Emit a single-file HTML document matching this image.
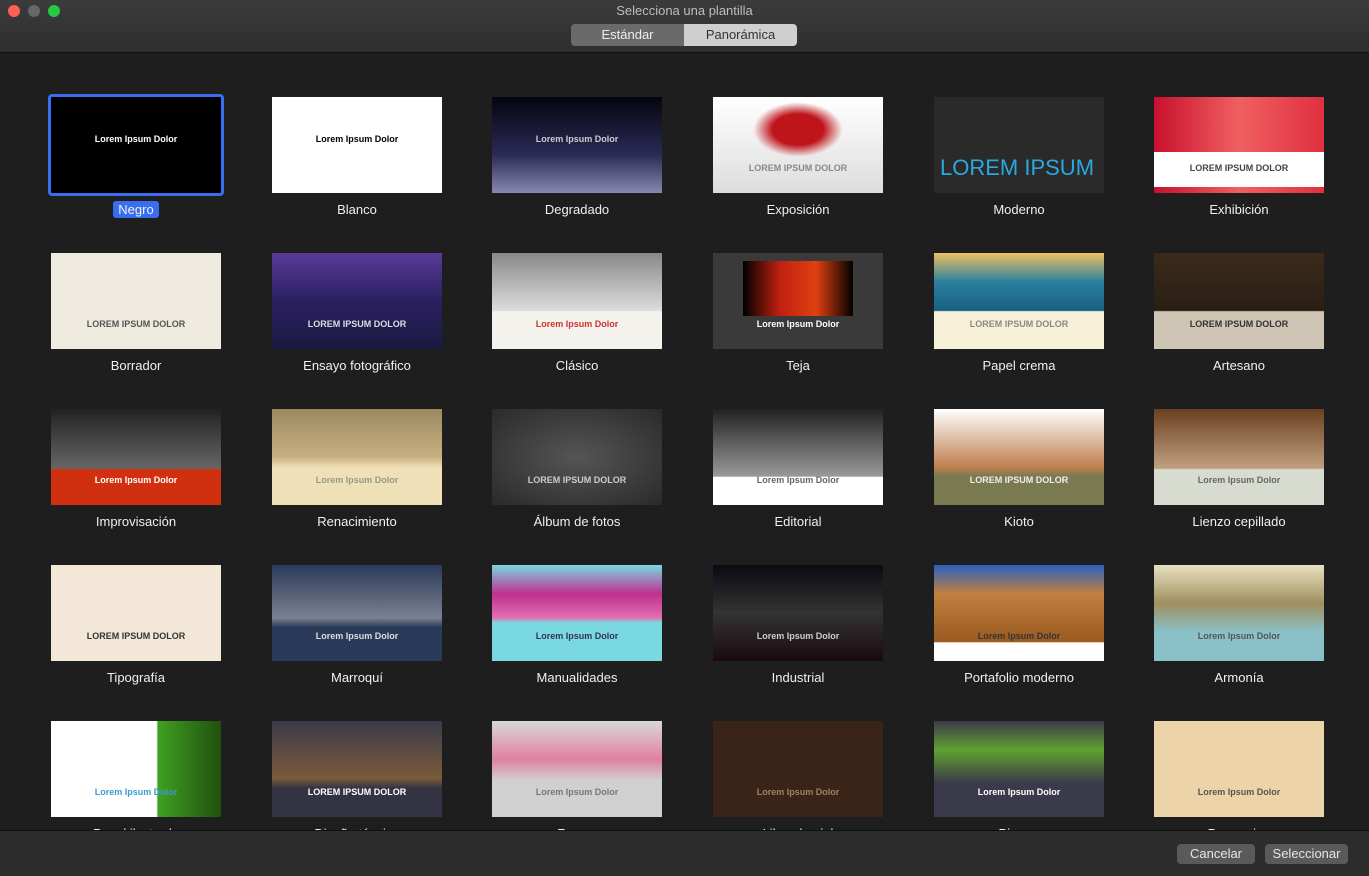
<!DOCTYPE html>
<html><head><meta charset="utf-8"><style>
*{margin:0;padding:0;box-sizing:border-box}
body{width:1369px;height:876px;background:#1e1e1e;font-family:"Liberation Sans",sans-serif;overflow:hidden;position:relative}
.top{position:absolute;left:0;top:0;width:1369px;height:53px;background:linear-gradient(#3c3b3c,#2f2e2f);border-bottom:1px solid #111}
.title{position:absolute;top:3px;width:100%;text-align:center;color:#bdbdbd;font-size:13px}
.dot{position:absolute;top:5px;width:12px;height:12px;border-radius:50%}
.seg{position:absolute;top:24px;left:571px;width:226px;height:22px;border-radius:4px;overflow:hidden;display:flex;font-size:13px}
.seg div{width:113px;text-align:center;line-height:22px}
.main{position:absolute;top:54px;left:0;width:1369px;height:776px;background:#1e1e1e;overflow:hidden}
.bot{position:absolute;top:830px;left:0;width:1369px;height:46px;background:#2c2c2c;border-top:1px solid #111}
.btn{position:absolute;top:13px;height:20px;background:#5a5a5a;color:#e6e6e6;font-size:13px;line-height:20px;text-align:center;border-radius:4px}
.t{position:absolute;width:170px;height:96px;overflow:hidden;font-size:9px;text-align:center}
.l{position:absolute;width:220px;text-align:center;color:#f0f0f0;font-size:13px}
</style></head><body>
<div class="top">
<div class="dot" style="left:8px;background:#fe5f57"></div>
<div class="dot" style="left:28px;background:#676767"></div>
<div class="dot" style="left:48px;background:#28c840"></div>
<div class="title">Selecciona una plantilla</div>
<div class="seg"><div style="background:#6a6a6a;color:#eee">Estándar</div><div style="background:#cfcfcf;color:#333">Panorámica</div></div>
</div>
<div class="main" id="m"></div>
<div class="bot">
<div class="btn" style="left:1177px;width:78px">Cancelar</div>
<div class="btn" style="left:1265px;width:83px">Seleccionar</div>
</div>
<script>
const cols=[51,272,492,713,934,1154],rows=[97,253,409,565,721];
const d=[
["Negro","#000","#fff","Lorem Ipsum Dolor"],
["Blanco","#fff","#000","Lorem Ipsum Dolor"],
["Degradado","linear-gradient(#05050f,#2a2a55 60%,#8888b0)","#ccc","Lorem Ipsum Dolor"],
["Exposición","linear-gradient(#fff,#ddd)","#888","LOREM IPSUM DOLOR",'<div style="position:absolute;left:40px;top:5px;width:90px;height:55px;background:radial-gradient(ellipse,#c0141b 40%,transparent 70%)"></div>'],
["Moderno","#2a2a2a","#2aa8e0","LOREM IPSUM"],
["Exhibición","linear-gradient(90deg,#c8102e,#f06060,#e03040)","#444","LOREM IPSUM DOLOR",'<div style="position:absolute;left:0;top:55px;width:170px;height:35px;background:#fff"></div>'],
["Borrador","#f0ebe0","#555","LOREM IPSUM DOLOR"],
["Ensayo fotográfico","linear-gradient(#5a3a9a,#2a2060 50%,#1a1a40)","#ddd","LOREM IPSUM DOLOR"],
["Clásico","linear-gradient(#888,#ddd 60%,#f4f2ec 61%)","#c33","Lorem Ipsum Dolor"],
["Teja","#3a3a3a","#fff","Lorem Ipsum Dolor",'<div style="position:absolute;left:30px;top:8px;width:110px;height:55px;background:linear-gradient(90deg,#000,#c02010,#e04010,#000)"></div>'],
["Papel crema","linear-gradient(#f0c060,#2a80a0 30%,#1a6080 60%,#f7f0d8 61%)","#888","LOREM IPSUM DOLOR"],
["Artesano","linear-gradient(#3a2a1a,#2a1e14 60%,#cfc5b5 61%)","#333","LOREM IPSUM DOLOR"],
["Improvisación","linear-gradient(#222,#666 62%,#d03010 63%)","#fff","Lorem Ipsum Dolor"],
["Renacimiento","linear-gradient(#9a8a60,#c8b080 50%,#efe0b8 61%)","#998","Lorem Ipsum Dolor"],
["Álbum de fotos","radial-gradient(#555,#2a2a2a)","#ccc","LOREM IPSUM DOLOR"],
["Editorial","linear-gradient(#222,#999 70%,#fff 71%)","#666","Lorem Ipsum Dolor"],
["Kioto","linear-gradient(#fff,#c08050 60%,#7a7a50 70%)","#eee","LOREM IPSUM DOLOR"],
["Lienzo cepillado","linear-gradient(#6a4020,#c0a080 62%,#d8dcd0 63%)","#666","Lorem Ipsum Dolor"],
["Tipografía","#f3e8d8","#333","LOREM IPSUM DOLOR"],
["Marroquí","linear-gradient(#2a3a5a,#7a8090 55%,#2a3a5a 65%)","#ddd","Lorem Ipsum Dolor"],
["Manualidades","linear-gradient(#7ad8e0,#c03090 30%,#e070b0 55%,#7ad8e0 60%)","#335","Lorem Ipsum Dolor"],
["Industrial","linear-gradient(#0a0a12,#333 50%,#1a0a10)","#ccc","Lorem Ipsum Dolor"],
["Portafolio moderno","linear-gradient(#2a60c0,#c08040 30%,#9a5a20 80%,#fff 81%)","#333","Lorem Ipsum Dolor"],
["Armonía","linear-gradient(#e8e0c0,#a09060 40%,#8ac0c8 70%)","#555","Lorem Ipsum Dolor"],
["Papel ilustrado","linear-gradient(90deg,#fff 62%,#40a020 63%,#205010)","#3a9ad0","Lorem Ipsum Dolor"],
["Diseño técnico","linear-gradient(#3a3a4a,#7a5a3a 60%,#333344 70%)","#fff","LOREM IPSUM DOLOR"],
["Fresco","linear-gradient(#d8d8d8,#e080a0 40%,#d0d0d0 62%)","#777","Lorem Ipsum Dolor"],
["Libro de piel","#3a2418","#a08060","Lorem Ipsum Dolor"],
["Pizarra","linear-gradient(#3a3a4a,#60a030 30%,#3a3a4a 65%)","#fff","Lorem Ipsum Dolor"],
["Pergamino","#ecd4a8","#555","Lorem Ipsum Dolor"]];
let h='';
d.forEach((x,i)=>{const c=cols[i%6],r=rows[Math.floor(i/6)]-54;
const big=x[3]=="LOREM IPSUM";
h+=`<div class="t" style="left:${c}px;top:${r}px;background:${x[1]}">${x[4]||''}<div style="position:absolute;left:${big?6:0}px;right:0;text-align:${big?'left':'center'};top:${big?58:(i<3?37:66)}px;color:${x[2]};font-size:${big?22:9}px;font-weight:${big?'normal':'bold'}">${x[3]}</div></div>`;
if(i==0)h+=`<div style="position:absolute;left:${c-3}px;top:${r-3}px;width:176px;height:102px;border:3px solid #3a6ef0;border-radius:4px"></div>`;
if(x[0])h+=`<div class="l" style="left:${c-25}px;top:${r+105}px">${i==0?'<span style="background:#3a6ef0;padding:1px 5px;border-radius:3px">Negro</span>':x[0]}</div>`;
});
document.getElementById('m').innerHTML=h;
</script>
</body></html>
